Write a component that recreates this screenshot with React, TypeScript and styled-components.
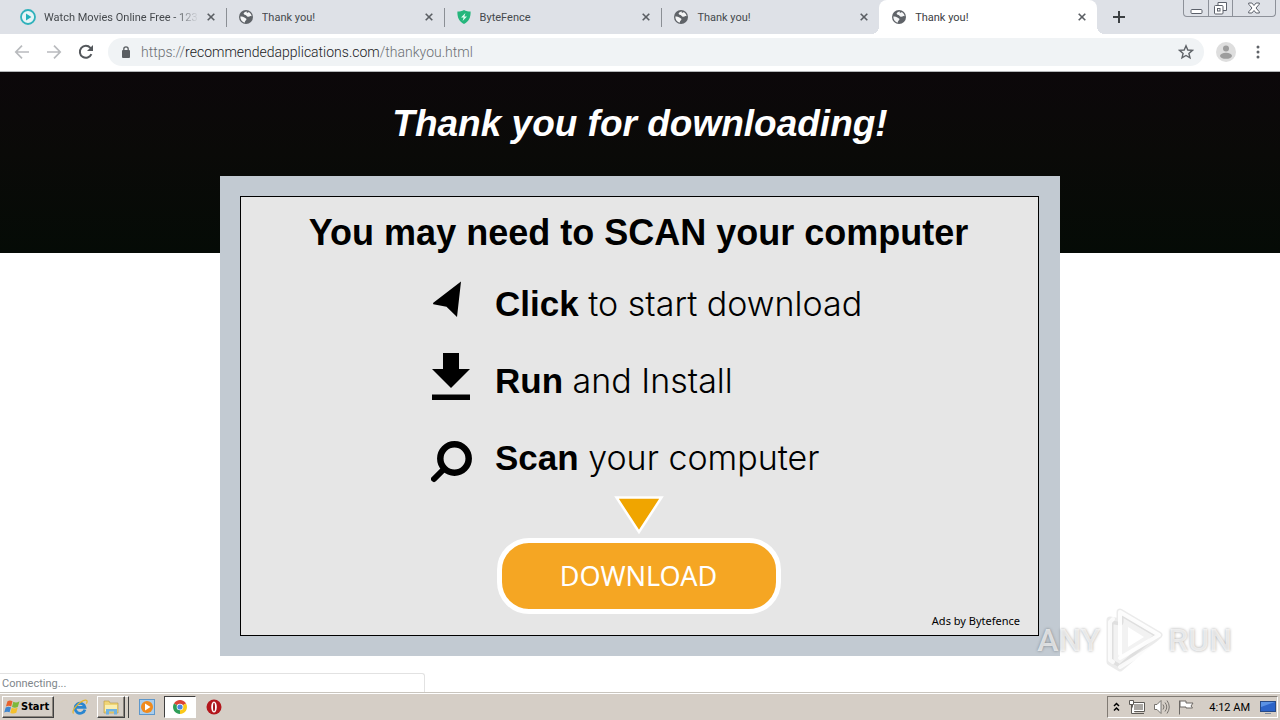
import React from "react";
import styled, { createGlobalStyle, css } from "styled-components";

const UI_FONT = 'Roboto, "Open Sans", sans-serif';
const SANS = '"Liberation Sans", Arial, sans-serif';

const GlobalStyle = createGlobalStyle`
  *, *::before, *::after { box-sizing: border-box; }
  body { margin: 0; background: #fff; font-family: ${UI_FONT}; }
  button, input { font: inherit; color: inherit; }
  button { padding: 0; border: 0; background: none; cursor: pointer; }
  svg { display: block; flex: none; }
`;

const Screen = styled.div`
  display: flex;
  flex-direction: column;
  min-height: 100vh;
`;

/* ---------- browser chrome ---------- */

const TabStrip = styled.div`
  display: flex;
  height: 34px;
  padding-left: 8px;
  background: #dee1e7;
`;

const TabList = styled.div`
  display: flex;
  flex: 0 1 1089px;
  min-width: 0;
`;

const Tab = styled.div<{ $active?: boolean; $divider?: boolean }>`
  position: relative;
  display: flex;
  align-items: center;
  flex: 1 1 0;
  min-width: 0;
  gap: 8px;
  padding: 0 11px 0 12px;
  color: ${(p) => (p.$active ? "#3c4043" : "#45494d")};

  ${(p) =>
    p.$divider &&
    css`
      &::after {
        content: "";
        position: absolute;
        right: -1px;
        top: 8px;
        width: 1px;
        height: 19px;
        background: #8b8f95;
      }
    `}

  ${(p) =>
    p.$active &&
    css`
      background: #fff;
      border-radius: 8px 8px 0 0;
      &::before,
      &::after {
        content: "";
        position: absolute;
        bottom: 0;
        width: 8px;
        height: 8px;
      }
      &::before {
        left: -8px;
        background: radial-gradient(circle at 0 0, transparent 8px, #fff 8px);
      }
      &::after {
        right: -8px;
        background: radial-gradient(circle at 100% 0, transparent 8px, #fff 8px);
      }
    `}
`;

const TabTitle = styled.span<{ $fade?: boolean }>`
  flex: 1;
  min-width: 0;
  overflow: hidden;
  white-space: nowrap;
  padding-top: 1px;
  font-size: 11px;
  line-height: 16px;
  ${(p) =>
    p.$fade &&
    css`
      mask-image: linear-gradient(to right, #000 84%, transparent);
    `}
`;

const TabClose = styled.button`
  display: grid;
  place-items: center;
  width: 8px;
  height: 16px;
`;

const NewTab = styled.button`
  display: grid;
  place-items: center;
  width: 28px;
  height: 34px;
  margin-left: 8px;
`;

const WindowControls = styled.div`
  display: flex;
  height: 17px;
  margin: 0 4px 0 auto;
  border: 1px solid #8d9199;
  border-top: 0;
  border-radius: 0 0 4px 4px;
`;

const WindowButton = styled.button<{ $wide?: boolean }>`
  display: grid;
  place-items: center;
  width: ${(p) => (p.$wide ? 43 : 24)}px;
  & + & {
    border-left: 1px solid #8d9199;
  }
`;

const Toolbar = styled.div`
  display: flex;
  align-items: center;
  height: 38px;
  padding: 0 12px 2px 14px;
  border-bottom: 1px solid #b4b6b8;
  background: #fff;
`;

const NavButton = styled.button`
  display: grid;
  place-items: center;
  width: 16px;
  height: 28px;
  margin-right: 16px;
`;

const Omnibox = styled.div`
  display: flex;
  align-items: center;
  flex: 1;
  min-width: 0;
  height: 28px;
  margin-left: -2px;
  padding: 0 10px 0 12px;
  border-radius: 14px;
  background: #f0f3f5;
`;

const Address = styled.div`
  flex: 1;
  min-width: 0;
  margin-left: 9px;
  overflow: hidden;
  white-space: nowrap;
  font-size: 14px;
  font-weight: 300;
  line-height: 20px;
  color: #6b6f73;
`;

const Host = styled.span`
  color: #202124;
`;

const Avatar = styled.button`
  width: 20px;
  height: 20px;
  margin: 0 0 0 12px;
`;

const MenuButton = styled.button`
  display: grid;
  place-items: center;
  width: 20px;
  height: 28px;
  margin-left: 12px;
`;

/* ---------- page ---------- */

const Page = styled.main`
  position: relative;
  flex: 1;
  background: #fff;
`;

const Banner = styled.header`
  height: 181px;
  padding-top: 30px;
  background: linear-gradient(#0c080a, #0a0a08 45%, #050b06);
`;

const BannerTitle = styled.h1`
  margin: 0;
  font: italic bold 37px/44px ${SANS};
  text-align: center;
  color: #fff;
`;

const Ad = styled.section`
  width: 840px;
  max-width: 100%;
  margin: -77px auto 0;
  padding: 20px 21px 20px 20px;
  background: #c2cad2;
`;

const AdCard = styled.div`
  display: flex;
  flex-direction: column;
  align-items: center;
  height: 440px;
  padding: 14px 2px 0 0;
  border: 1px solid #000;
  background: #e6e6e6;
  color: #000;
`;

const AdTitle = styled.h2`
  margin: 0 0 10px;
  font: bold 36px/44px ${SANS};
`;

const Steps = styled.ul`
  align-self: stretch;
  margin: 0;
  padding: 0 0 0 190px;
  list-style: none;
`;

const Step = styled.li`
  display: flex;
  align-items: center;
  gap: 22px;
  height: 77px;
  font: 300 34px/44px Inter, ${SANS};
  white-space: nowrap;
`;

const StepVerb = styled.strong`
  font: bold 35px/44px ${SANS};
`;

const DownloadButton = styled.button`
  width: 284px;
  height: 76px;
  margin-top: 4px;
  border: 5px solid #fff;
  border-radius: 32px;
  background: #f5a623;
  color: #fff;
  font: 27px/36px "Noto Sans", sans-serif;
`;

const AdCredit = styled.small`
  align-self: flex-end;
  margin-right: 16px;
  font: 11px/14px "Noto Sans", sans-serif;
`;

const StatusBubble = styled.div`
  position: absolute;
  left: 0;
  bottom: 0;
  width: 425px;
  height: 19px;
  padding-left: 2px;
  border: 1px solid #e2e2e2;
  border-width: 1px 1px 0 0;
  border-radius: 0 3px 0 0;
  background: #fff;
  font-size: 11px;
  line-height: 19px;
  color: #80868b;
`;

const Watermark = styled.div`
  position: absolute;
  right: 48px;
  bottom: 20px;
  display: flex;
  align-items: center;
  gap: 5px;
  font: 500 32px/64px Roboto, ${SANS};
  color: rgba(255, 255, 255, 0.7);
  text-shadow: 0 0 3px rgba(0, 0, 0, 0.35);
  pointer-events: none;
`;

/* ---------- taskbar ---------- */

const Taskbar = styled.footer`
  display: flex;
  align-items: center;
  height: 28px;
  padding: 1px 2px 0;
  border-top: 1px solid #c9c5be;
  box-shadow: inset 0 1px 0 #fff;
  background: #d5cec6;
`;

const raised = css`
  border: 1px solid;
  border-color: #fff #404040 #404040 #fff;
  box-shadow: inset -1px -1px 0 #8b857d;
`;

const StartButton = styled.button`
  display: flex;
  align-items: center;
  gap: 1px;
  width: 52px;
  height: 22px;
  margin-right: 18px;
  padding-left: 1px;
  font: bold 11px/16px "DejaVu Sans Condensed", "DejaVu Sans", sans-serif;
  color: #000;
  ${raised}
`;

const TaskButton = styled.button<{ $look?: "raised" | "pressed"; $width: number }>`
  display: grid;
  place-items: center;
  width: ${(p) => p.$width}px;
  height: 22px;
  margin-right: 9px;
  ${(p) => p.$look === "raised" && raised}
  ${(p) =>
    p.$look === "pressed" &&
    css`
      border: 1px solid;
      border-color: #404040 #fff #fff #404040;
      background: #fff;
    `}
`;

const StackEdge = styled.span`
  width: 4px;
  height: 22px;
  margin: 0 10px 0 -9px;
  border-right: 1px solid #404040;
  border-top: 1px solid #fff;
`;

const Tray = styled.div`
  display: flex;
  align-items: center;
  gap: 8px;
  height: 22px;
  margin-left: auto;
  padding: 0 1px 0 5px;
  border: 1px solid;
  border-color: #807a73 #fff #fff #807a73;
`;

const Clock = styled.time`
  margin: 0 2px 0 7px;
  padding-top: 1px;
  font-size: 11px;
  line-height: 16px;
  white-space: nowrap;
  color: #000;
`;

/* ---------- icons ---------- */

const GlobeIcon = () => (
  <svg width="16" height="16" viewBox="0 0 16 16">
    <circle cx="8" cy="8" r="7" fill="#5f6368" />
    <path
      d="M8.800 2.400C7 2.600 5.800 3.400 5.600 4.600c0 1 .9 1.200 1.900 1.300.9.200 1 1 1.700 1.500 1 .6 2.300.1 3.300-.3.6-.3 1.200-.2 1.200.5-.2-2-1.500-3.900-3.100-4.500-.2.600-.9 1-1.800.9z"
      fill="#f4f5f6"
    />
    <path
      d="M2.300 7.600c1.400-.2 2.900 0 4 .9.700.6 1.900.6 2.100 1.500.200 1-.9 1.400-1.300 2.200-.2.500-.2 1.100-.6 1.500C4 13 2.200 10.600 2.300 7.600z"
      fill="#f4f5f6"
    />
  </svg>
);

const PlayFavicon = () => (
  <svg width="16" height="16" viewBox="0 0 16 16">
    <circle cx="8" cy="8" r="7" fill="#e6f4f6" stroke="#2fb1bb" strokeWidth="1.8" />
    <path d="M6 4.6v6.8L11.4 8z" fill="#22b0bb" />
  </svg>
);

const ShieldFavicon = () => (
  <svg width="16" height="16" viewBox="0 0 16 16">
    <path d="M8 1c2 1 4.400 1.500 6.600 1.600C14.800 8.500 13 12.800 8 15 3 12.800 1.200 8.500 1.400 2.600 3.600 2.500 6 2 8 1z" fill="#25b67c" />
    <path d="M9.400 4 5 8.600h2.600L6.600 12 11 7.400H8.400z" fill="#e2fbef" />
  </svg>
);

const CloseIcon = () => (
  <svg width="8" height="8" viewBox="0 0 8 8">
    <path d="M.7.7l6.600 6.600M7.300.7.7 7.300" stroke="#5a5e63" strokeWidth="1.600" />
  </svg>
);

const favicons = { play: PlayFavicon, globe: GlobeIcon, shield: ShieldFavicon };

const tabs: { icon: keyof typeof favicons; title: string; fade?: boolean }[] = [
  { icon: "play", title: "Watch Movies Online Free - 123", fade: true },
  { icon: "globe", title: "Thank you!" },
  { icon: "shield", title: "ByteFence" },
  { icon: "globe", title: "Thank you!" },
  { icon: "globe", title: "Thank you!" },
];
const activeTab = 4;

function BrowserTabs() {
  return (
    <TabStrip>
      <TabList>
        {tabs.map((tab, i) => {
          const Icon = favicons[tab.icon];
          return (
            <Tab key={i} $active={i === activeTab} $divider={i < activeTab - 1}>
              <Icon />
              <TabTitle $fade={tab.fade}>{tab.title}</TabTitle>
              <TabClose aria-label="Close tab">
                <CloseIcon />
              </TabClose>
            </Tab>
          );
        })}
      </TabList>
      <NewTab aria-label="New tab">
        <svg width="12" height="12" viewBox="0 0 12 12">
          <path d="M6 0v12M0 6h12" stroke="#3c4043" strokeWidth="2" />
        </svg>
      </NewTab>
      <WindowControls>
        <WindowButton aria-label="Minimize">
          <svg width="13" height="14" viewBox="0 0 13 14">
            <rect x="1" y="8.500" width="11" height="4" rx="1" fill="#fff" stroke="#5c616b" />
          </svg>
        </WindowButton>
        <WindowButton aria-label="Restore">
          <svg width="13" height="14" viewBox="0 0 13 14">
            <path d="M4 1.500h8.500v8H4z" fill="#fff" stroke="#5c616b" />
            <rect x=".5" y="4.500" width="8.500" height="8.500" rx="1" fill="#fff" stroke="#5c616b" />
            <rect x="3.500" y="7.500" width="2.500" height="2.500" fill="#fff" stroke="#5c616b" />
          </svg>
        </WindowButton>
        <WindowButton aria-label="Close" $wide>
          <svg width="12" height="12" viewBox="0 0 12 12">
            <path
              d="M.7 1h3.200L6 3.500 8.100 1h3.200v1.200L8 6l3.300 3.800V11H8.100L6 8.500 3.900 11H.7V9.800L4 6 .7 2.200z"
              fill="#fff"
              stroke="#5c616b"
            />
          </svg>
        </WindowButton>
      </WindowControls>
    </TabStrip>
  );
}

function BrowserToolbar() {
  return (
    <Toolbar>
      <NavButton aria-label="Back">
        <svg width="16" height="16" viewBox="0 0 16 16">
          <path d="M15 8H2M8 1.700 1.800 8 8 14.300" fill="none" stroke="#b9bbbe" strokeWidth="1.700" />
        </svg>
      </NavButton>
      <NavButton aria-label="Forward">
        <svg width="16" height="16" viewBox="0 0 16 16">
          <path d="M1 8h13M8 1.700 14.200 8 8 14.300" fill="none" stroke="#b9bbbe" strokeWidth="1.700" />
        </svg>
      </NavButton>
      <NavButton aria-label="Reload">
        <svg width="16" height="16" viewBox="0 0 16 16">
          <path d="M13.400 10.200A6 6 0 1 1 12.400 3.900L13.500 5" fill="none" stroke="#54585c" strokeWidth="2" />
          <path d="M15 1v6H9z" fill="#54585c" />
        </svg>
      </NavButton>
      <Omnibox>
        <svg width="12" height="14" viewBox="0 0 12 14">
          <rect x="2" y="5" width="8" height="8" rx="1" fill="#5a5e62" />
          <path d="M3.800 5.500V4a2.200 2.200 0 0 1 4.400 0v1.500" fill="none" stroke="#5a5e62" strokeWidth="1.300" />
        </svg>
        <Address>
          https://<Host>recommendedapplications.com</Host>/thankyou.html
        </Address>
        <button aria-label="Bookmark this page">
          <svg width="16" height="16" viewBox="0 0 16 16">
            <path
              d="M8 1.800 9.800 6l4.600.4-3.500 3 1.100 4.500L8 11.500l-4 2.400 1.100-4.500-3.500-3L6.200 6z"
              fill="none"
              stroke="#5f6368"
              strokeWidth="1.400"
            />
          </svg>
        </button>
      </Omnibox>
      <Avatar aria-label="Profile">
        <svg width="20" height="20" viewBox="0 0 20 20">
          <circle cx="10" cy="10" r="10" fill="#dedede" />
          <circle cx="10" cy="6.500" r="3" fill="#9d9d9d" />
          <ellipse cx="10" cy="13.800" rx="6" ry="3" fill="#9d9d9d" />
        </svg>
      </Avatar>
      <MenuButton aria-label="Menu">
        <svg width="4" height="14" viewBox="0 0 4 14">
          <g fill="#5f6368">
            <circle cx="2" cy="2" r="1.500" />
            <circle cx="2" cy="7" r="1.500" />
            <circle cx="2" cy="12" r="1.500" />
          </g>
        </svg>
      </MenuButton>
    </Toolbar>
  );
}

function AdPanel() {
  return (
    <Ad>
      <AdCard>
        <AdTitle>You may need to SCAN your computer</AdTitle>
        <Steps>
          <Step>
            <svg width="42" height="60" viewBox="0 0 42 60">
              <path d="M30 7.500 2 29l.3 1.200 13.200 2.600L26 43z" />
            </svg>
            <span>
              <StepVerb>Click</StepVerb> to start download
            </span>
          </Step>
          <Step>
            <svg width="42" height="60" viewBox="0 0 42 60">
              <path d="M12 2h16v16h11L20 37 1 18h11zM1 43.500h38V49H1z" />
            </svg>
            <span>
              <StepVerb>Run</StepVerb> and Install
            </span>
          </Step>
          <Step>
            <svg width="42" height="60" viewBox="0 0 42 60">
              <circle cx="23.500" cy="30.500" r="14.200" fill="none" stroke="#000" strokeWidth="6.500" />
              <path d="M13 41 3 51" stroke="#000" strokeWidth="6" strokeLinecap="round" />
            </svg>
            <span>
              <StepVerb>Scan</StepVerb> your computer
            </span>
          </Step>
        </Steps>
        <svg width="50" height="38" viewBox="0 0 50 38">
          <path d="M2.500 1.500h45L25 36z" fill="#f0a500" stroke="#fff" strokeWidth="2.500" />
        </svg>
        <DownloadButton>DOWNLOAD</DownloadButton>
        <AdCredit>Ads by Bytefence</AdCredit>
      </AdCard>
    </Ad>
  );
}

const markPath = "M15 46V4L54 27 16 55M5 12V53H10L45 31 24 18V40";

function AnyRunMark() {
  return (
    <Watermark>
      <span>ANY</span>
      <svg width="58" height="64" viewBox="0 0 58 64" fill="none" strokeLinejoin="round" strokeLinecap="round">
        <path d="M15 4 54 27 15 60 5 54V12l10 2z" fill="rgba(0,0,0,0.05)" stroke="rgba(0,0,0,0.08)" strokeWidth="7" />
        <path d="M15 46V4L54 27 15 50" stroke="#fff" strokeOpacity=".9" strokeWidth="4" />
        <path d="M8 11 5 14v38l3 2M15 59 54 35" stroke="#fff" strokeOpacity=".8" strokeWidth="4" />
        <path d="M23 19v20l16-10z" fill="#fff" />
      </svg>
      <span>RUN</span>
    </Watermark>
  );
}

function WindowsTaskbar() {
  return (
    <Taskbar>
      <StartButton>
        <svg width="16" height="16" viewBox="0 0 16 16">
          <path d="M3.500 2.300C5 1.200 6.800 1.200 8.500 2.200L7.200 7.400C5.500 6.500 3.800 6.500 1.900 7.500z" fill="#e8622c" />
          <path d="M9.300 2.700c1.900 1 3.800 1 6.200-.5l-1.600 5.600c-1.900 1.100-3.800 1.100-5.900.2z" fill="#7db83a" />
          <path d="M1.700 8.400C3.500 7.500 5.200 7.500 7 8.300l-1.400 5C3.900 12.500 2.100 12.500.2 13.500z" fill="#3f86cf" />
          <path d="M7.700 8.800c1.900.9 3.800.9 6-.2L12.300 13.800c-1.900 1-3.800 1-6 .1z" fill="#f4c02c" />
        </svg>
        Start
      </StartButton>
      <TaskButton $width={16} aria-label="Internet Explorer">
        <svg width="16" height="16" viewBox="0 0 16 16">
          <path d="M12.900 10.600A5 5 0 1 1 13 8.400H4.500" fill="none" stroke="#2a86d0" strokeWidth="2.800" />
          <path d="M1.500 14.500C-1 11 8 2 13.500 1.200c2.200-.3 1.800 2 .8 3.500" fill="none" stroke="#e5b52c" strokeWidth="1.200" />
        </svg>
      </TaskButton>
      <TaskButton $width={28} $look="raised" aria-label="Windows Explorer">
        <svg width="18" height="16" viewBox="0 0 18 16">
          <path d="M2 2h5l1 2h8v10H2z" fill="#efd577" stroke="#b9973c" strokeWidth=".6" />
          <path d="M3 6h12v6H3z" fill="#f9eeb0" />
          <path d="M4 15.500V10h11v5.500h-3V12.500H7v3z" fill="#6fb2e2" />
        </svg>
      </TaskButton>
      <StackEdge />
      <TaskButton $width={16} aria-label="Media Player">
        <svg width="16" height="16" viewBox="0 0 16 16">
          <rect x=".5" y=".5" width="15" height="15" fill="#a9cdec" stroke="#5d97cb" />
          <circle cx="8" cy="8" r="6" fill="#f08a1c" />
          <path d="M6 4.500v7L11.500 8z" fill="#fff" />
        </svg>
      </TaskButton>
      <TaskButton $width={32} $look="pressed" aria-label="Google Chrome">
        <svg width="14" height="14" viewBox="0 0 14 14">
          <path d="M7 7 .94 3.500A7 7 0 0 1 13.060 3.500z" fill="#dc4436" />
          <path d="M7 7V14A7 7 0 0 1 .94 3.500z" fill="#2f9e58" />
          <path d="M7 7l6.060-3.500A7 7 0 0 1 7 14z" fill="#fbc919" />
          <circle cx="7" cy="7" r="3.300" fill="#fff" />
          <circle cx="7" cy="7" r="2.600" fill="#4a86e0" />
        </svg>
      </TaskButton>
      <TaskButton $width={18} aria-label="Opera">
        <svg width="16" height="16" viewBox="0 0 16 16">
          <circle cx="8" cy="8" r="7.500" fill="#b3161c" />
          <ellipse cx="8" cy="8" rx="2.800" ry="5.500" fill="#fff" />
          <ellipse cx="8" cy="8" rx="1" ry="4.300" fill="#a31218" />
        </svg>
      </TaskButton>
      <Tray>
        <svg width="7" height="10" viewBox="0 0 7 10">
          <path d="M1 4l2.500-2.500L6 4M1 8.500 3.500 6 6 8.500" fill="none" stroke="#000" strokeWidth="1.500" />
        </svg>
        <svg width="17" height="16" viewBox="0 0 17 16">
          <path d="M4.500 3.500h12v9h-12z" fill="#fff" stroke="#5d5a56" />
          <path d="M6 5h9v6H6z" fill="#aaa7a3" />
          <path d="M7 14.500h9" stroke="#5d5a56" />
          <path d="M1.500 1.500h4v4h-4zM3.500 6v8.500H7" fill="#fff" stroke="#5d5a56" />
        </svg>
        <svg width="17" height="16" viewBox="0 0 17 16">
          <path d="M1.500 5.500h2.500l4-4v13l-4-4H1.500z" fill="#fff" stroke="#77736e" />
          <path d="M10 5.500q2 2.500 0 5M12 3.500q3.500 4.500 0 9M14 1.500q4.500 6.500 0 13" fill="none" stroke="#77736e" />
        </svg>
        <svg width="16" height="16" viewBox="0 0 16 16">
          <path d="M1.500 1.500v14M2 2h6v2h7l-2 3 1.500 2H8V8H2z" fill="#fff" stroke="#6d6965" />
        </svg>
        <Clock>4:12 AM</Clock>
        <svg width="16" height="16" viewBox="0 0 16 16">
          <rect x=".5" y="2.500" width="15" height="10" fill="#2c64c8" stroke="#274a86" />
          <path d="M1 3h14L1 8z" fill="#5a92e4" />
          <path d="M5 14.500h6" stroke="#7e8ba0" />
        </svg>
      </Tray>
    </Taskbar>
  );
}

export default function App() {
  return (
    <Screen>
      <GlobalStyle />
      <BrowserTabs />
      <BrowserToolbar />
      <Page>
        <Banner>
          <BannerTitle>Thank you for downloading!</BannerTitle>
        </Banner>
        <AdPanel />
        <StatusBubble role="status">Connecting...</StatusBubble>
        <AnyRunMark />
      </Page>
      <WindowsTaskbar />
    </Screen>
  );
}
